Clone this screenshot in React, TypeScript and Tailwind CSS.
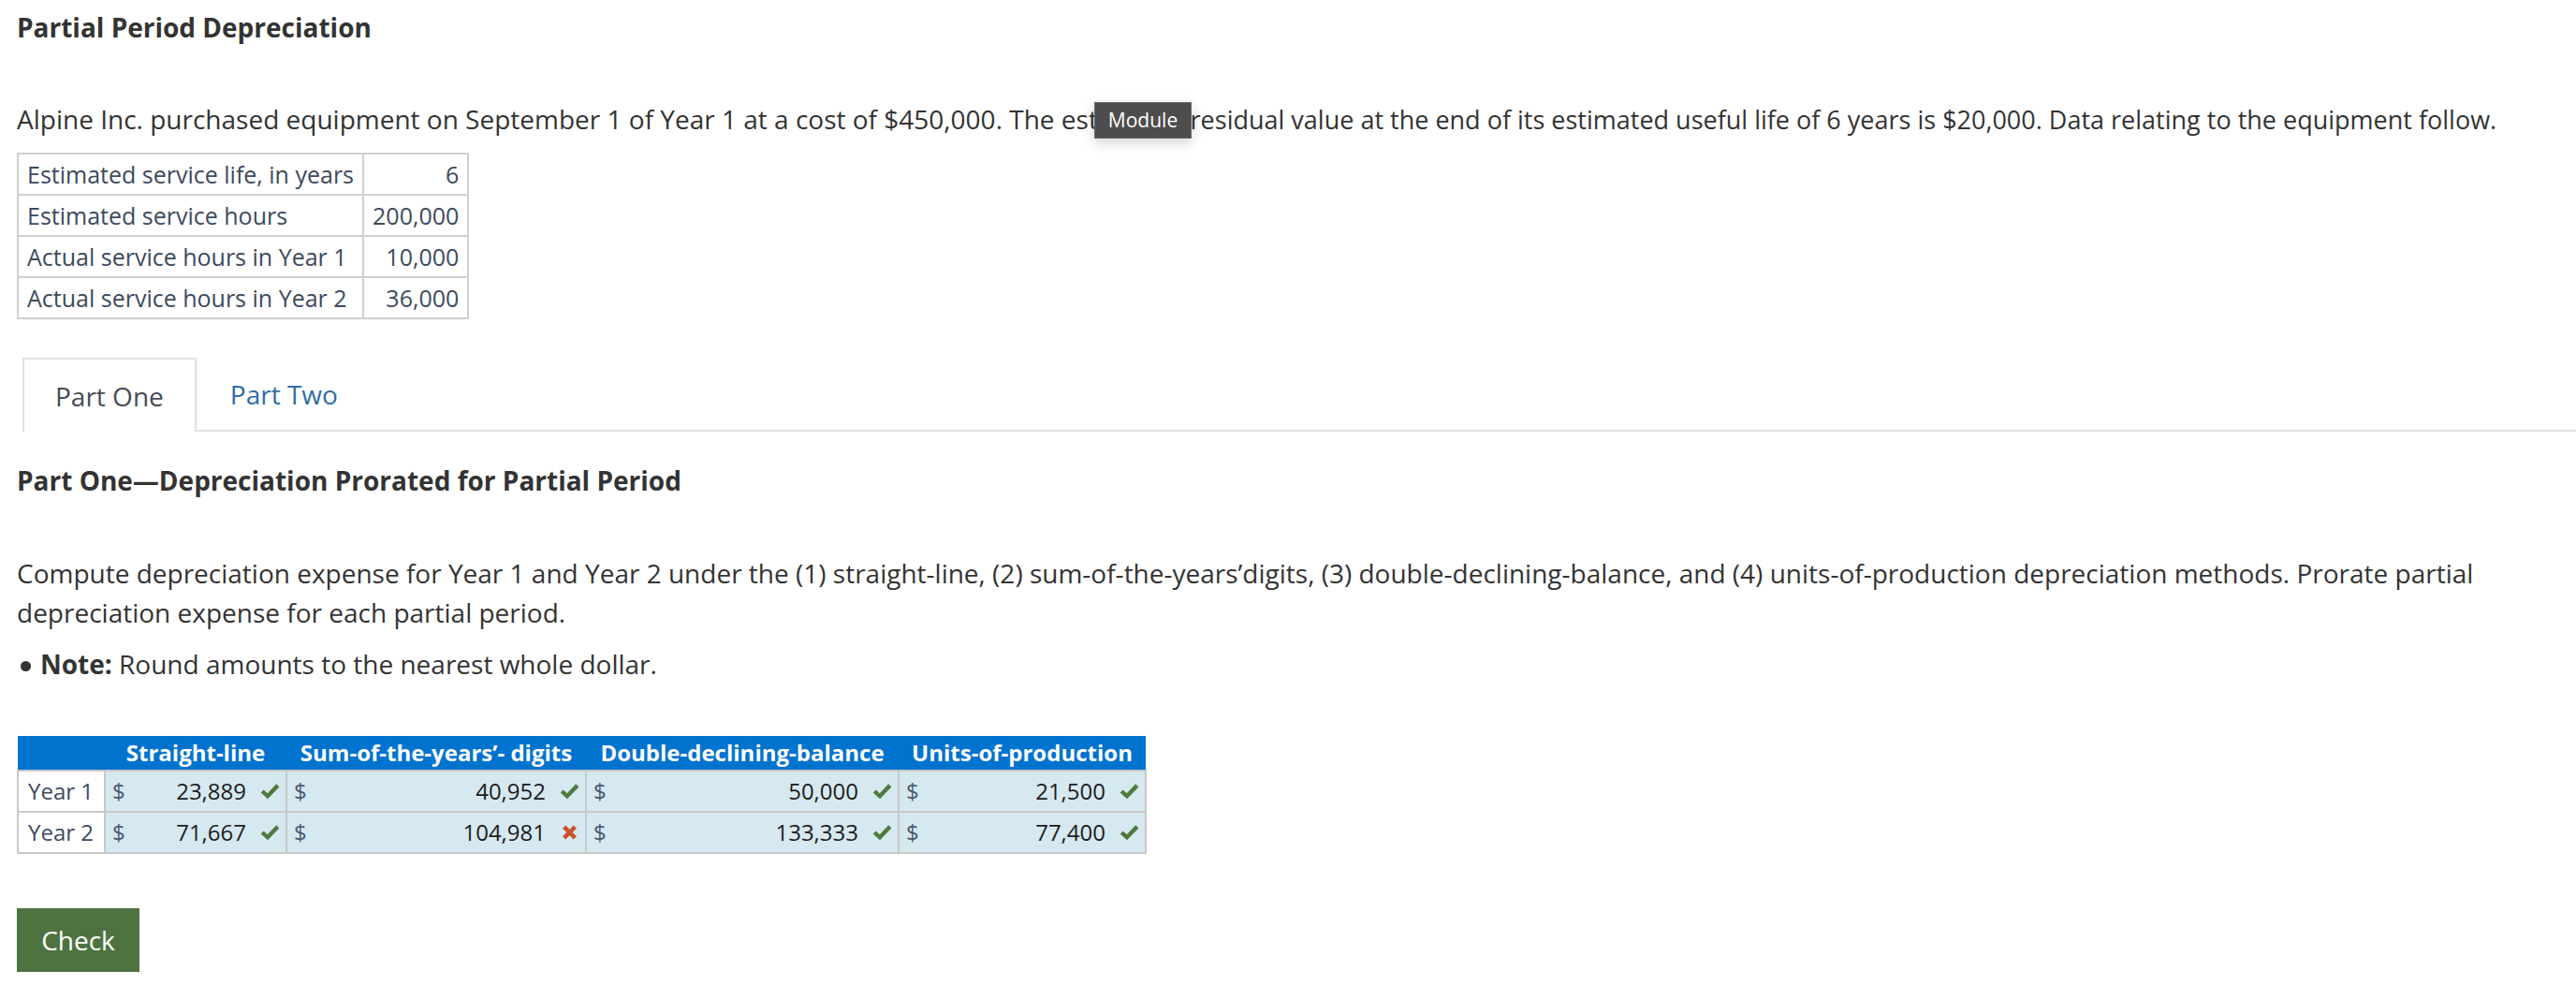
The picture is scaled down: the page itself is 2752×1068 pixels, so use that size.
import React from 'react';

const CheckMark = () => (
  <svg width="21" height="18" viewBox="0 0 24 20" className="shrink-0">
    <path d="M2.5 10 L9 16 L21.5 3" fill="none" stroke="#507a3e" strokeWidth="5" />
  </svg>
);

const CrossMark = () => (
  <svg width="19" height="18" viewBox="0 0 20 20" className="shrink-0">
    <path d="M3.5 3.5 L16.5 16.5 M16.5 3.5 L3.5 16.5" fill="none" stroke="#c9522d" strokeWidth="5" />
  </svg>
);

const equipmentData = [
  ['Estimated service life, in years', '6'],
  ['Estimated service hours', '200,000'],
  ['Actual service hours in Year 1', '10,000'],
  ['Actual service hours in Year 2', '36,000'],
];

type Answer = { value: string; ok: boolean };

const rows: { label: string; answers: Answer[] }[] = [
  {
    label: 'Year 1',
    answers: [
      { value: '23,889', ok: true },
      { value: '40,952', ok: true },
      { value: '50,000', ok: true },
      { value: '21,500', ok: true },
    ],
  },
  {
    label: 'Year 2',
    answers: [
      { value: '71,667', ok: true },
      { value: '104,981', ok: false },
      { value: '133,333', ok: true },
      { value: '77,400', ok: true },
    ],
  },
];

const columns = [
  { title: 'Straight-line', width: 'w-[194px]' },
  { title: 'Sum-of-the-years\u2019- digits', width: 'w-[320px]' },
  { title: 'Double-declining-balance', width: 'w-[334px]' },
  { title: 'Units-of-production', width: 'w-[264px]' },
];

export default function App() {
  return (
    <div className="relative min-h-screen bg-white font-['Open_Sans',sans-serif] text-[#333333]">
      <div className="pl-[18px] pt-[8px]">
        {/* Problem header */}
        <h1 className="text-[28px] leading-[42px] font-bold">Partial Period Depreciation</h1>
        <p className="mt-[56px] text-[28px] leading-[42px] whitespace-nowrap">
          Alpine Inc. purchased equipment on September 1 of Year 1 at a cost of $450,000. The estimated{' '}
          <span className="text-[27px]">residual value at the end of its estimated useful life of 6 years is $20,000. Data relating to the equipment follow.</span>
        </p>

        <table className="mt-[14px] border-collapse text-[25px] text-[#3c4a5c]">
          <tbody>
            {equipmentData.map(([label, value]) => (
              <tr key={label} className="h-[44px]">
                <td className="w-[368px] border-2 border-[#d0d0d0] px-[9px] leading-none whitespace-nowrap">{label}</td>
                <td className="w-[109px] border-2 border-[#d0d0d0] px-[9px] text-right leading-none whitespace-nowrap">{value}</td>
              </tr>
            ))}
          </tbody>
        </table>

        {/* Tabs */}
        <div className="mt-[41px] ml-[6px] flex border-b-2 border-[#dde2e7] text-[28px] leading-[42px]">
          <div className="-mb-[2px] flex h-[79px] items-center border-2 border-b-0 border-[#dde2e7] bg-white px-[33px] text-[#454c55]">
            Part One
          </div>
          <div className="flex h-[77px] items-center px-[36px] text-[#2e6da6]">Part Two</div>
        </div>

        <h2 className="mt-[31px] text-[28px] leading-[42px] font-bold">
          Part One—Depreciation Prorated for Partial Period
        </h2>

        <p className="mt-[57px] pr-[18px] text-[28px] leading-[42px]">
          Compute depreciation expense for Year 1 and Year 2 under the (1) straight-line, (2) sum-of-the-years’digits, (3) double-declining-balance, and (4) units-of-production depreciation methods. Prorate partial depreciation expense for each partial period.
        </p>
        <div className="mt-[13px] flex items-center text-[28px] leading-[42px]">
          <span className="ml-[4px] mr-[10px] mt-[4px] h-[11px] w-[11px] rounded-full bg-[#333333]"></span>
          <span>
            <span className="font-bold">Note:</span> Round amounts to the nearest whole dollar.
          </span>
        </div>

        {/* Answer table */}
        <table className="mt-[56px] border-collapse text-[24px]">
          <thead>
            <tr className="h-[37px] bg-[#0073cf] text-white">
              <th className="w-[93px]"></th>
              {columns.map(col => (
                <th key={col.title} className={`${col.width} font-bold leading-none whitespace-nowrap`}>
                  {col.title}
                </th>
              ))}
            </tr>
          </thead>
          <tbody>
            {rows.map(row => (
              <tr key={row.label} className="h-[44px]">
                <td className="border-2 border-[#c8c8c8] bg-white pl-[10px] leading-none text-[#3d4b5e]">
                  {row.label}
                </td>
                {row.answers.map((a, i) => (
                  <td key={i} className="border-2 border-[#c8c8c8] bg-[#d6e8f0] leading-none">
                    <div className="flex items-center pl-[7px] pr-[6px]">
                      <span className="text-[#4a5a70]">$</span>
                      <span className="flex-1 text-right text-[#1c1c1c]">{a.value}</span>
                      <span className="ml-[15px] flex w-[21px] justify-center">
                        {a.ok ? <CheckMark /> : <CrossMark />}
                      </span>
                    </div>
                  </td>
                ))}
              </tr>
            ))}
          </tbody>
        </table>

        <button className="mt-[58px] h-[68px] w-[131px] bg-[#4e7340] text-[28px] text-white">Check</button>
      </div>

      {/* Hover tooltip over the first paragraph */}
      <div className="absolute left-[1169px] top-[109px] flex h-[39px] w-[104px] items-center justify-center border border-[#6a6a6a] bg-[#4d4d4d] text-[21px] text-white shadow-[0_4px_14px_rgba(0,0,0,0.18)]">
        Module
      </div>
    </div>
  );
}
